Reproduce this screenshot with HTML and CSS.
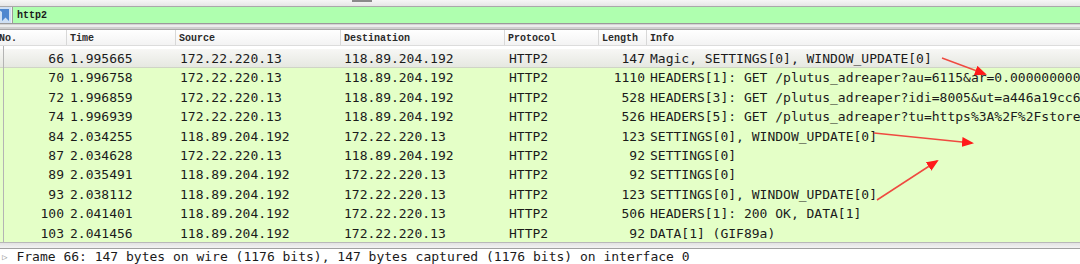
FILE: index.html
```html
<!DOCTYPE html>
<html lang="en">
<head>
    <meta charset="UTF-8">
    <title>http2 - Wireshark</title>
    <link rel="stylesheet" href="styles.css">
</head>
<body>

<div class="window">
    <div class="toolbar-edge"><span class="grip"></span></div>

    <div class="filter-bar">
        <span class="bookmark">
            <svg width="12" height="16" viewBox="0 0 12 16">
                <rect x="0" y="0" width="12" height="16" fill="#cfe0f4"/>
                <path d="M-1 2 H10 V14 L6.5 10.5 L3 14 V5" fill="#4f87cf"/>
            </svg>
        </span>
        <div class="filter-input">http2</div>
    </div>

    <div class="pane-gap"></div>

    <div class="packet-list">
        <div class="row header">
            <span class="col-no">No.</span>
            <span class="col-time">Time</span>
            <span class="col-src">Source</span>
            <span class="col-dst">Destination</span>
            <span class="col-proto">Protocol</span>
            <span class="col-len">Length</span>
            <span class="col-info">Info</span>
        </div>

        <div class="rows">
            <div class="row packet selected">
                <span class="col-no">66</span><span class="col-time">1.995665</span><span class="col-src">172.22.220.13</span><span class="col-dst">118.89.204.192</span><span class="col-proto">HTTP2</span><span class="col-len">147</span><span class="col-info">Magic, SETTINGS[0], WINDOW_UPDATE[0]</span>
            </div>
            <div class="row packet">
                <span class="col-no">70</span><span class="col-time">1.996758</span><span class="col-src">172.22.220.13</span><span class="col-dst">118.89.204.192</span><span class="col-proto">HTTP2</span><span class="col-len">1110</span><span class="col-info">HEADERS[1]: GET /plutus_adreaper?au=6115&amp;ar=0.000000000</span>
            </div>
            <div class="row packet">
                <span class="col-no">72</span><span class="col-time">1.996859</span><span class="col-src">172.22.220.13</span><span class="col-dst">118.89.204.192</span><span class="col-proto">HTTP2</span><span class="col-len">528</span><span class="col-info">HEADERS[3]: GET /plutus_adreaper?idi=8005&amp;ut=a446a19cc6</span>
            </div>
            <div class="row packet">
                <span class="col-no">74</span><span class="col-time">1.996939</span><span class="col-src">172.22.220.13</span><span class="col-dst">118.89.204.192</span><span class="col-proto">HTTP2</span><span class="col-len">526</span><span class="col-info">HEADERS[5]: GET /plutus_adreaper?tu=https%3A%2F%2Fstore</span>
            </div>
            <div class="row packet">
                <span class="col-no">84</span><span class="col-time">2.034255</span><span class="col-src">118.89.204.192</span><span class="col-dst">172.22.220.13</span><span class="col-proto">HTTP2</span><span class="col-len">123</span><span class="col-info">SETTINGS[0], WINDOW_UPDATE[0]</span>
            </div>
            <div class="row packet">
                <span class="col-no">87</span><span class="col-time">2.034628</span><span class="col-src">172.22.220.13</span><span class="col-dst">118.89.204.192</span><span class="col-proto">HTTP2</span><span class="col-len">92</span><span class="col-info">SETTINGS[0]</span>
            </div>
            <div class="row packet">
                <span class="col-no">89</span><span class="col-time">2.035491</span><span class="col-src">118.89.204.192</span><span class="col-dst">172.22.220.13</span><span class="col-proto">HTTP2</span><span class="col-len">92</span><span class="col-info">SETTINGS[0]</span>
            </div>
            <div class="row packet">
                <span class="col-no">93</span><span class="col-time">2.038112</span><span class="col-src">118.89.204.192</span><span class="col-dst">172.22.220.13</span><span class="col-proto">HTTP2</span><span class="col-len">123</span><span class="col-info">SETTINGS[0], WINDOW_UPDATE[0]</span>
            </div>
            <div class="row packet">
                <span class="col-no">100</span><span class="col-time">2.041401</span><span class="col-src">118.89.204.192</span><span class="col-dst">172.22.220.13</span><span class="col-proto">HTTP2</span><span class="col-len">506</span><span class="col-info">HEADERS[1]: 200 OK, DATA[1]</span>
            </div>
            <div class="row packet">
                <span class="col-no">103</span><span class="col-time">2.041456</span><span class="col-src">118.89.204.192</span><span class="col-dst">172.22.220.13</span><span class="col-proto">HTTP2</span><span class="col-len">92</span><span class="col-info">DATA[1] (GIF89a)</span>
            </div>

            <!-- red annotation arrows drawn over the list -->
            <svg class="annotations" width="1080" height="196" viewBox="0 46 1080 196">
                <defs>
                    <marker id="head" markerWidth="12" markerHeight="10" refX="10" refY="5" orient="auto" markerUnits="userSpaceOnUse">
                        <path d="M0 0 L12 5 L0 10 Z" fill="#ff1a1a"/>
                    </marker>
                </defs>
                <line x1="942" y1="58" x2="985" y2="74" stroke="#ef4a40" stroke-width="1.5" marker-end="url(#head)"/>
                <line x1="874" y1="133" x2="972" y2="143" stroke="#ef4a40" stroke-width="1.5" marker-end="url(#head)"/>
                <line x1="877" y1="200" x2="937" y2="161" stroke="#ef4a40" stroke-width="1.5" marker-end="url(#head)"/>
            </svg>
        </div>
    </div>

    <div class="splitter"></div>

    <div class="details">
        <span class="expander">&#9655;</span>
        <span>Frame 66: 147 bytes on wire (1176 bits), 147 bytes captured (1176 bits) on interface 0</span>
    </div>
</div>

</body>
</html>
```

FILE: styles.css
```css
/* Wireshark packet list, classic Windows look */
:root {
    --chrome: #f0f0f0;
    --filter-ok: #afffaf;
    --http-row: #e4ffc7;
    --grid-line: #d8d8d8;
    --text-color: #1b1b1b;
    --mono: 'DejaVu Sans Mono', 'Liberation Mono', monospace;
    --header-font: 'Liberation Mono', 'DejaVu Sans Mono', monospace;
}

* {
    margin: 0;
    padding: 0;
    box-sizing: border-box;
}

body {
    width: 1080px;
    height: 264px;
    overflow: hidden;
    background-color: var(--chrome);
    color: var(--text-color);
    font-family: var(--mono);
}

.window {
    display: flex;
    flex-direction: column;
    height: 264px;
}

.window > * {
    flex-shrink: 0;
}

.toolbar-edge {
    height: 7px;
    background: linear-gradient(#f6f6f6, #e6e6e6);
    border-bottom: 1px solid #a9a9a9;
    padding-left: 352px;
}

.grip {
    display: block;
    width: 20px;
    height: 2px;
    background-color: #8a8a8a;
}

.filter-bar {
    display: flex;
    height: 17px;
    border-bottom: 1px solid #9a9a9a;
}

.bookmark {
    width: 13px;
    overflow: hidden;
    border-right: 1px solid #9a9a9a;
}

.bookmark svg {
    display: block;
    margin-left: -1px;
}

.filter-input {
    flex: 1;
    background-color: var(--filter-ok);
    font-family: var(--header-font);
    font-size: 10px;
    font-weight: bold;
    line-height: 15px;
    padding-top: 1px;
    padding-left: 4px;
}

.pane-gap {
    height: 6px;
    border-bottom: 1px solid #a8a8a8;
    background: linear-gradient(#d4d4d4 0, #d4d4d4 1px, #ececec 1px, #ececec 3px, #cfcfcf 3px);
}

.packet-list {
    display: flex;
    flex-direction: column;
    background-color: white;
}

.row {
    display: grid;
    grid-template-columns: 67px 109px 165px 164px 94px 48px 1fr;
    white-space: nowrap;
    overflow: hidden;
}

.row span {
    overflow: hidden;
    padding-left: 3px;
}

.header {
    height: 16px;
    margin-left: -4px;
    grid-template-columns: 71px 109px 165px 164px 94px 48px 1fr;
    background: linear-gradient(#ffffff, #f3f3f3);
    border-bottom: 1px solid #dcdcdc;
    font-family: var(--header-font);
    font-size: 10px;
    font-weight: bold;
    line-height: 14px;
    color: #2a2a2a;
}

.header span {
    padding-top: 2px;
    border-right: 1px solid var(--grid-line);
}

.header .col-info {
    border-right: none;
}

.rows {
    position: relative;
    padding-top: 3px;
    height: 196px;
    overflow: hidden;
    background-color: white;
}

/* left gutter line of the list view */
.rows::before {
    content: "";
    position: absolute;
    left: 3px;
    top: 0;
    bottom: 0;
    width: 1px;
    background-color: #b4b4b4;
    z-index: 1;
}

.packet {
    height: 19.4px;
    line-height: 19px;
    font-size: 13px;
    background-color: var(--http-row);
}

.packet.selected {
    background: linear-gradient(#f7f7f5, #e6e8e1);
    border-bottom: 1px solid #cfd4c6;
}

.packet .col-no,
.packet .col-len {
    text-align: right;
    padding-left: 0;
    padding-right: 3px;
}

.packet .col-len {
    padding-right: 2px;
}

.packet .col-src,
.packet .col-proto {
    padding-left: 4px;
}

.annotations {
    position: absolute;
    left: 0;
    top: 0;
    z-index: 2;
}

.splitter {
    height: 7px;
    border-top: 1px solid #b8b8b8;
    border-bottom: 1px solid #a0a0a0;
    background: linear-gradient(#e2e2e2, #f2f2f2);
}

.details {
    flex: 1;
    display: flex;
    gap: 9px;
    background-color: white;
    font-size: 13px;
    line-height: 16px;
    padding-left: 2px;
    white-space: nowrap;
    overflow: hidden;
}

.expander {
    font-size: 9px;
    color: #9a9a9a;
}
```
